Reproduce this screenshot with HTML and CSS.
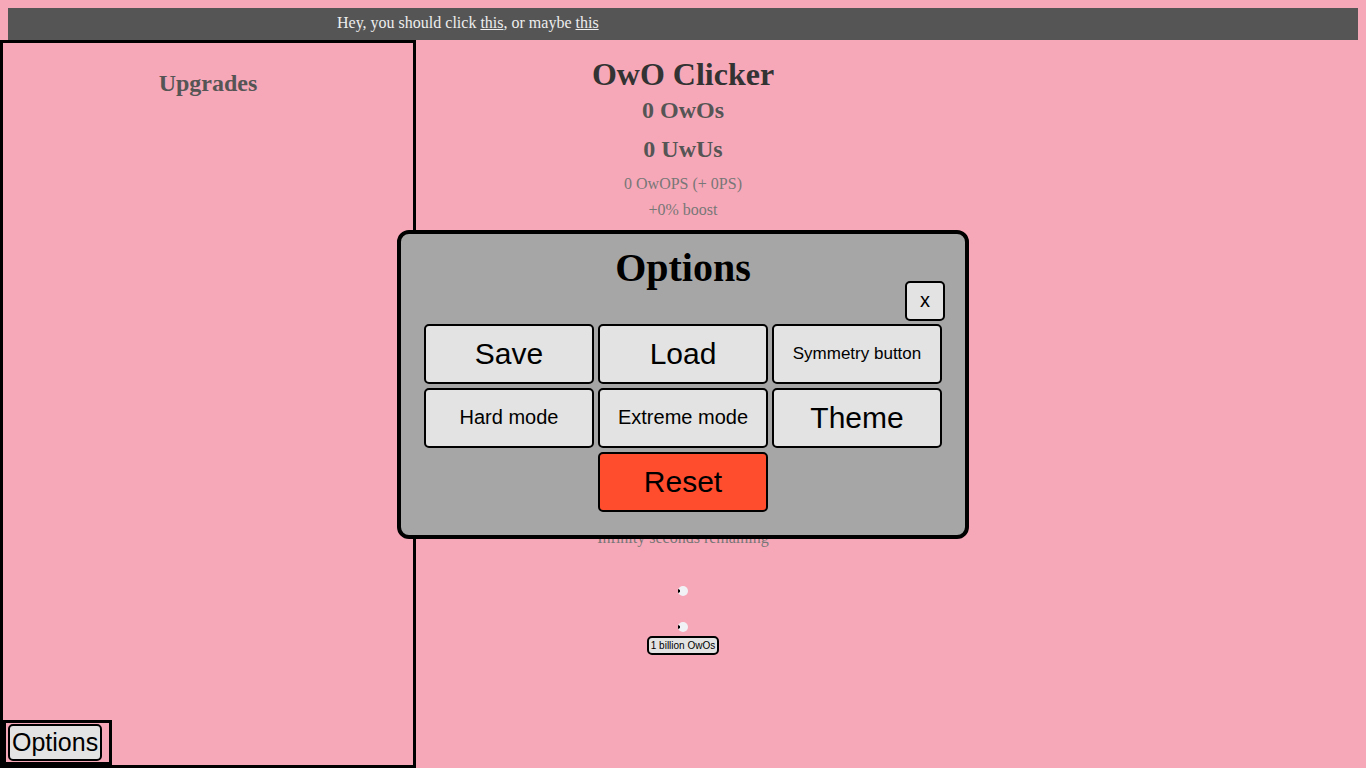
FILE: index.html
```html
<!DOCTYPE html>
<html lang="en">
<head>
<meta charset="utf-8">
<title>OwO Clicker</title>
<link rel="stylesheet" href="styles.css">
</head>
<body>
<header class="banner">Hey, you should click <a href="#one">this</a>, or maybe <a href="#two">this</a></header>
<div class="layout">
  <aside class="upgrades">
    <h2 class="upgrades-title">Upgrades</h2>
    <div class="options-box"><button class="btn options-open" type="button">Options</button></div>
  </aside>
  <main class="game">
    <h1 class="game-title">OwO Clicker</h1>
    <h2 class="score">0 OwOs</h2>
    <h2 class="score">0 UwUs</h2>
    <p class="stat">0 OwOPS (+ 0PS)</p>
    <p class="stat">+0% boost</p>
    <p class="stat remaining">Infinity seconds remaining</p>
    <svg class="dot" viewBox="0 0 10 10" aria-hidden="true"><circle cx="5" cy="5" r="5" fill="#f1f2f6"/><path d="M0 3 L2 4 V6 L0 7Z" fill="#000"/></svg>
    <svg class="dot" viewBox="0 0 10 10" aria-hidden="true"><circle cx="5" cy="5" r="5" fill="#f1f2f6"/><path d="M0 3 L2 4 V6 L0 7Z" fill="#000"/></svg>
    <button class="btn goal" type="button">1 billion OwOs</button>
  </main>
</div>
<div class="overlay">
  <section class="modal" role="dialog" aria-labelledby="modal-title">
    <h2 class="modal-title" id="modal-title">Options</h2>
    <button class="btn close" type="button">x</button>
    <div class="grid">
      <button class="btn option" type="button">Save</button>
      <button class="btn option" type="button">Load</button>
      <button class="btn option small" type="button">Symmetry button</button>
      <button class="btn option medium" type="button">Hard mode</button>
      <button class="btn option medium" type="button">Extreme mode</button>
      <button class="btn option" type="button">Theme</button>
      <button class="btn option reset" type="button">Reset</button>
    </div>
  </section>
</div>
</body>
</html>
```
FILE: styles.css
```css
* { box-sizing: border-box; }
body {
  margin: 0;
  min-height: 100vh;
  display: flex;
  flex-direction: column;
  background: #f7a8b8;
  font-family: "Liberation Serif", "Times New Roman", serif;
  font-size: 16px;
}
h1, h2, p { margin: 0; }
.banner {
  margin: 8px 8px 0;
  padding: 6px 0 8px 329px;
  line-height: 18px;
  background: #555;
  color: #eee;
}
.banner a { color: inherit; }
.layout {
  flex: 1;
  display: grid;
  grid-template-columns: 416px 1fr 416px;
}
.upgrades {
  display: flex;
  flex-direction: column;
  justify-content: space-between;
  border: 3px solid #000;
}
.upgrades-title {
  padding-top: 27px;
  text-align: center;
  font-size: 24px;
  line-height: 27px;
  color: #555;
}
.btn {
  padding: 0;
  border: 2px solid #000;
  border-radius: 5px;
  background: #e3e3e3;
  color: #000;
  font-family: "Liberation Sans", Arial, sans-serif;
}
.options-box {
  display: flex;
  align-self: flex-start;
  padding: 1px 7px 1px 2px;
  border: 3px solid #000;
}
.options-open {
  padding: 0 2px;
  font-size: 25px;
  line-height: 33px;
}
.game {
  display: flex;
  flex-direction: column;
  align-items: center;
  padding-top: 16px;
}
.game-title {
  margin-bottom: 1px;
  font-size: 32px;
  line-height: 36px;
  color: #333;
}
.score {
  margin-top: 4px;
  font-size: 24px;
  line-height: 27px;
  color: #555;
}
.score + .score { margin: 12px 0 4px; }
.stat {
  margin-top: 8px;
  line-height: 18px;
  color: #777;
}
.remaining { margin: 310px 0 13px; }
.dot {
  width: 10px;
  height: 10px;
  margin-top: 26px;
}
.goal {
  margin-top: 4px;
  padding: 0 2px;
  font-size: 10px;
  line-height: 15px;
}
.overlay {
  position: fixed;
  inset: 0;
  display: flex;
  align-items: center;
  justify-content: center;
}
.modal {
  display: flex;
  flex-direction: column;
  padding: 12px 23px 23px;
  border: 4px solid #000;
  border-radius: 12px;
  background: #a6a6a6;
}
.modal-title {
  text-align: center;
  font-size: 40px;
  line-height: 44px;
}
.close {
  align-self: flex-end;
  width: 40px;
  height: 40px;
  margin: -9px -3px 3px 0;
  font-size: 20px;
}
.grid {
  display: grid;
  grid-template-columns: repeat(3, 170px);
  grid-auto-rows: 60px;
  gap: 4px;
}
.option { font-size: 30px; }
.medium { font-size: 20px; }
.small { font-size: 17px; }
.reset {
  grid-column: 2;
  background: #ff4d2e;
}
```
